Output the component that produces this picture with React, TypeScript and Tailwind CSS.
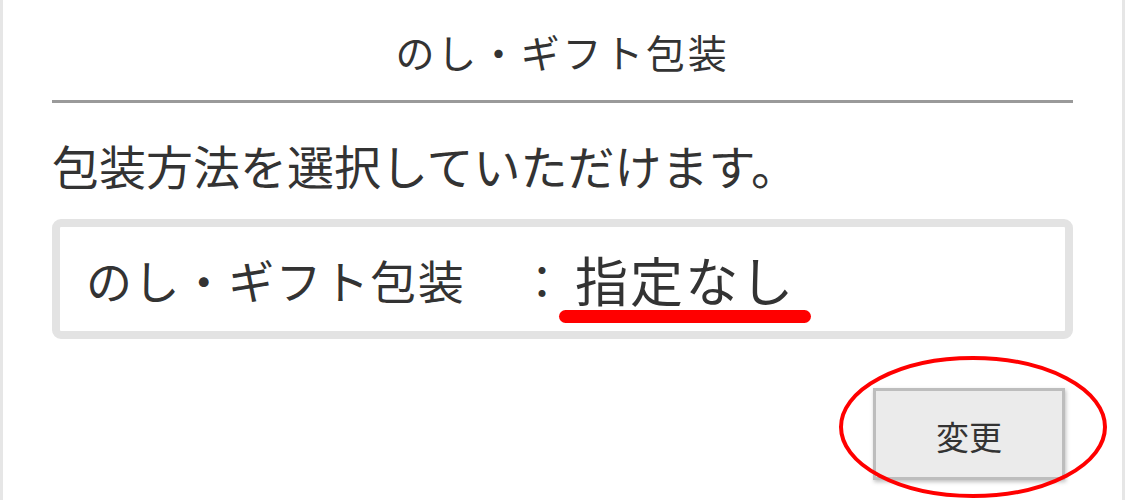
import React from "react";

const jp = { fontFamily: '"Noto Sans CJK JP", "Noto Sans", sans-serif' };

export default function App() {
  return (
    <div
      className="relative w-[1125px] h-[500px] overflow-hidden bg-white border-l-[3px] border-r-[3px] border-[#e6e6e6] text-[#333333]"
      style={jp}
    >
      <div className="px-[49px]">
        {/* section heading */}
        <div className="h-[103px] border-b-[3px] border-[#9a9a9a] flex items-center justify-center pt-[2px]">
          <h2 className="text-[39px] leading-none tracking-[0.07em]">のし・ギフト包装</h2>
        </div>

        <p className="mt-[38px] text-[47px] leading-none">包装方法を選択していただけます。</p>

        {/* current selection */}
        <div className="mt-[31px] h-[120px] rounded-[9px] border-[8px] border-[#e3e3e3] flex items-center pl-[26px]">
          <span className="w-[433px] text-[46px] leading-none tracking-[0.03em]">のし・ギフト包装</span>
          <span className="text-[46px] leading-none">：</span>
          <span className="relative ml-[10px] text-[53px] leading-none tracking-[0.04em]">
            指定なし
            <span className="absolute left-[-16px] right-[-16px] top-[57px] h-[13px] rounded-full bg-[#ff0000]" />
          </span>
        </div>

        <div className="flex justify-end mt-[49px] pr-[8px]">
          <button className="w-[192px] h-[92px] bg-[#ebebeb] border-[3px] border-[#bdbdbd] shadow-[1px_2px_4px_rgba(0,0,0,0.25)] text-[33px] leading-none pt-[4px]">
            変更
          </button>
        </div>
      </div>

      {/* highlight ring around the button */}
      <svg className="absolute left-[833px] top-[354px]" width="276" height="146" viewBox="0 0 276 146">
        <ellipse cx="137" cy="73" rx="132" ry="69" fill="none" stroke="#ff0000" strokeWidth="4" />
      </svg>
    </div>
  );
}
